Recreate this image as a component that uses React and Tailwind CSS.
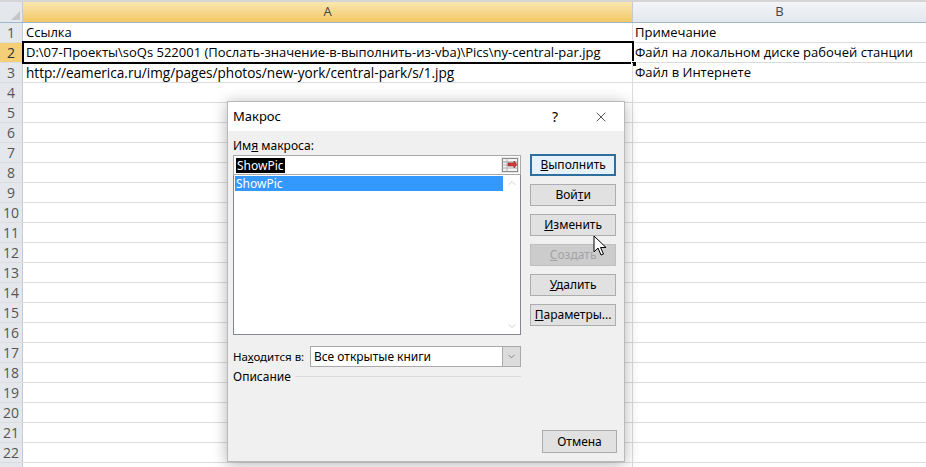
import { X, ChevronUp, ChevronDown } from "lucide-react";

const rows = [
  { a: "Ссылка", b: "Примечание" },
  {
    a: "D:\\07-Проекты\\soQs 522001 (Послать-значение-в-выполнить-из-vba)\\Pics\\ny-central-par.jpg",
    b: "Файл на локальном диске рабочей станции",
  },
  { a: "http://eamerica.ru/img/pages/photos/new-york/central-park/s/1.jpg", b: "Файл в Интернете", latin: true },
];

const sheetFont = { fontFamily: '"Open Sans", "Liberation Sans", sans-serif' };

const Cursor = () => (
  <svg width="14" height="22" viewBox="0 0 14 22" className="absolute left-[593px] top-[235px]">
    <path d="M1 1 L1 17 L5 13 L8 20 L10.5 19 L7.5 12.5 L13 12.5 Z" fill="white" stroke="black" strokeWidth="1" strokeLinejoin="round" />
  </svg>
);

const RefIcon = () => (
  <svg width="16" height="14" viewBox="0 0 16 14">
    <rect x="0.5" y="0.5" width="15" height="13" fill="#f4f4f4" stroke="#8a8a8a" />
    <line x1="0.5" y1="4" x2="15.5" y2="4" stroke="#9a9a9a" />
    <line x1="0.5" y1="7" x2="15.5" y2="7" stroke="#b0b0b0" />
    <line x1="0.5" y1="10" x2="15.5" y2="10" stroke="#b0b0b0" />
    <line x1="5" y1="0.5" x2="5" y2="13.5" stroke="#b0b0b0" />
    <path d="M6 5 L12 5 L12 3 L15 6.5 L12 10 L12 8 L6 8 Z" fill="#d83b3b" stroke="#8c1c1c" strokeWidth="0.6" />
  </svg>
);

const Btn = ({ children, primary, disabled, className = "" }) => (
  <div
    className={`h-[22px] flex items-center justify-center text-[12px] border ${
      primary
        ? "border-[#2f6f9f] border-2 bg-[#e5f1fb]"
        : disabled
        ? "border-[#bfbfbf] bg-[#cccccc] text-[#a3a3a3]"
        : "border-[#adadad] bg-[#e1e1e1] text-black"
    } ${className}`}
  >
    {children}
  </div>
);

const Dialog = () => (
  <div
    className="absolute left-[227px] top-[101px] w-[398px] h-[361px] bg-[#f0f0f0] border border-[#b9b9b9] shadow-[0_2px_14px_rgba(0,0,0,0.3)] flex flex-col"
    style={{ fontFamily: '"Noto Sans", "Liberation Sans", sans-serif' }}
  >
    {/* title bar */}
    <div className="h-[29px] bg-white flex items-center pl-[5px] shrink-0">
      <span className="text-[13px] text-black flex-1">Макрос</span>
      <span className="text-[14px] text-black w-[46px] text-center">?</span>
      <span className="w-[46px] flex justify-center">
        <X size={16} strokeWidth={1} color="#000" />
      </span>
    </div>
    {/* body */}
    <div className="flex flex-1 pl-[5px] pr-[8px] relative">
      <div className="w-[289px] flex flex-col">
        <div className="text-[12px] mt-[7px] leading-[15px] text-black">
          Им<span className="underline">я</span> макроса:
        </div>
        <div className="h-[20px] mt-[2px] bg-white border border-[#a9a9a9] flex items-center pl-[2px] relative">
          <span className="bg-black text-white text-[12px] leading-[15px] px-[1px]">ShowPic</span>
          <div className="absolute right-[1px] top-[1px] h-[16px] w-[18px] bg-[#e6e6e6] flex items-center justify-center">
            <RefIcon />
          </div>
        </div>
        <div className="h-[160px] bg-white border border-[#828790] border-t-0 flex">
          <div className="flex-1 pt-[1px] pl-[1px]">
            <div className="h-[15px] bg-[#3399ff] text-white text-[12px] leading-[15px] pl-[1px]">ShowPic</div>
          </div>
          <div className="w-[17px] flex flex-col justify-between items-center py-[2px] text-[#c2c2c2]">
            <ChevronUp size={12} strokeWidth={1.5} />
            <ChevronDown size={12} strokeWidth={1.5} />
          </div>
        </div>
        <div className="flex items-center mt-[11px] h-[21px]">
          <span className="text-[11.5px] w-[77px] text-black">
            На<span className="underline">х</span>одится в:
          </span>
          <div className="flex-1 h-[21px] bg-white border border-[#a9a9a9] flex items-center">
            <span className="flex-1 text-[12px] pl-[3px] text-black">Все открытые книги</span>
            <div className="w-[18px] h-full bg-[#dcdcdc] border-l border-[#a9a9a9] flex items-center justify-center text-[#606060]">
              <ChevronDown size={11} strokeWidth={1.5} />
            </div>
          </div>
        </div>
        <div className="flex items-center mt-[1px] h-[17px]">
          <span className="text-[12px] text-black">Описание</span>
          <div className="flex-1 h-px bg-[#dcdcdc] ml-[4px]" />
        </div>
      </div>
      <div className="w-[86px] ml-[9px] flex flex-col pt-[23px] gap-[8px]">
        <Btn primary>
          <span><span className="underline">В</span>ыполнить</span>
        </Btn>
        <Btn>
          <span>Вой<span className="underline">т</span>и</span>
        </Btn>
        <Btn>
          <span><span className="underline">И</span>зменить</span>
        </Btn>
        <Btn disabled>
          <span><span className="underline">С</span>оздать</span>
        </Btn>
        <Btn>
          <span><span className="underline">У</span>далить</span>
        </Btn>
        <Btn>
          <span><span className="underline">П</span>араметры...</span>
        </Btn>
      </div>
      <Btn className="absolute right-[7px] bottom-[8px] w-[75px] h-[23px]">Отмена</Btn>
    </div>
  </div>
);

export default function App() {
  const blank = Array.from({ length: 20 }, (_, i) => i + 4);
  return (
    <div className="relative w-[926px] h-[467px] overflow-hidden bg-white" style={sheetFont}>
      {/* column headers */}
      <div className="flex h-[23px] border-t-2 border-[#d5d5d5] border-b border-b-[#9eb6ce]">
        <div className="w-[23px] shrink-0 bg-[#e4e7ec] border-r border-[#c5cad1] relative">
          <div className="absolute right-[2px] bottom-[2px] w-0 h-0 border-l-[9px] border-l-transparent border-b-[9px] border-b-[#c3c7cd]" />
        </div>
        <div className="w-[610px] shrink-0 bg-gradient-to-b from-[#f9e6ae] to-[#f3c866] border-r border-[#c5cad1] flex items-center justify-center text-[13px] text-[#444]">
          A
        </div>
        <div className="flex-1 bg-gradient-to-b from-[#f2f4f7] to-[#e3e7ec] flex items-center justify-center text-[13px] text-[#444]">
          B
        </div>
      </div>
      {rows.map((r, i) => (
        <div key={i} className="flex h-[20px] border-b border-[#dadcdd]">
          <div
            className={`w-[23px] shrink-0 flex items-center justify-center text-[14px] border-r border-[#c5cad1] ${
              i === 1 ? "bg-[#f5cf78] text-[#333]" : "bg-[#e4e7ec] text-[#555]"
            }`}
          >
            {i + 1}
          </div>
          <div
            className={`w-[610px] shrink-0 relative border-r border-[#dadcdd] flex items-end pl-[3px] leading-[19px] text-black whitespace-nowrap ${
              r.latin ? "text-[13.6px]" : "text-[13px]"
            }`}
          >
            {r.a}
            {i === 1 && (
              <>
                <div className="absolute left-[-1px] top-[-2px] right-[-2px] bottom-[-2px] border-2 border-black" />
                <div className="absolute right-[-5px] bottom-[-5px] w-[6px] h-[6px] bg-black border border-white" />
              </>
            )}
          </div>
          <div className="flex-1 min-w-0 flex items-end pl-[2px] text-[13px] leading-[19px] text-black whitespace-nowrap">{r.b}</div>
        </div>
      ))}
      {blank.map((n) => (
        <div key={n} className="flex h-[20px] border-b border-[#dadcdd]">
          <div className="w-[23px] shrink-0 flex items-center justify-center text-[14px] text-[#555] bg-[#e4e7ec] border-r border-[#c5cad1]">
            {n < 23 ? n : ""}
          </div>
          <div className="w-[610px] shrink-0 border-r border-[#dadcdd]" />
          <div className="flex-1" />
        </div>
      ))}
      <Dialog />
      <Cursor />
    </div>
  );
}
